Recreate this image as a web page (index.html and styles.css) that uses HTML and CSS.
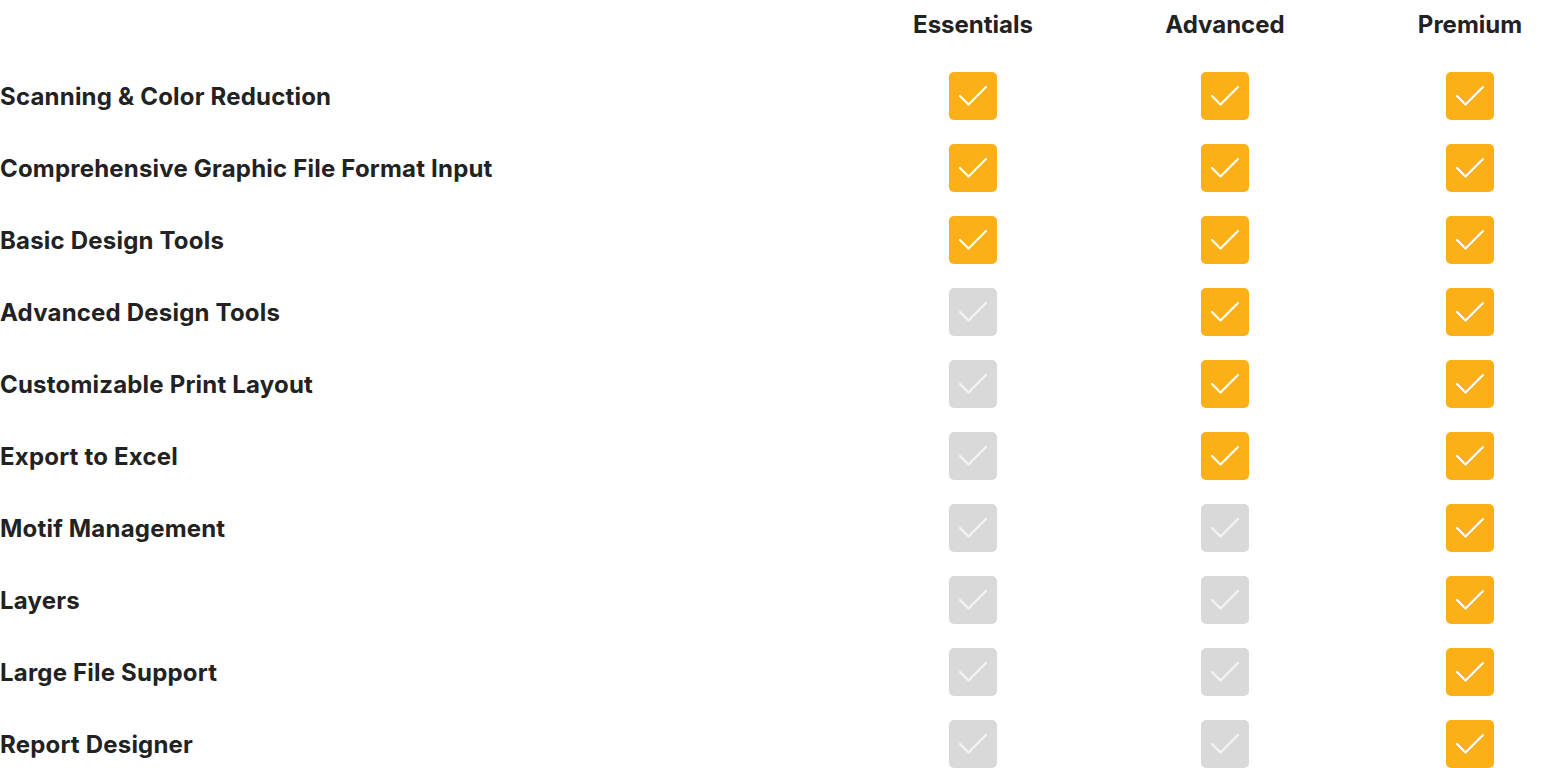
FILE: index.html
```html
<!DOCTYPE html>
<html>
<head>
<meta charset="utf-8">
<link rel="stylesheet" href="styles.css">
</head>
<body>
<div class="compare" id="grid"></div>
<script src="app.js"></script>
</body>
</html>
```

FILE: styles.css
```css
html, body { margin: 0; padding: 0; background: #fff; }
body { font-family: "Inter", "Liberation Sans", sans-serif; color: #222222; }
.compare {
  display: grid;
  grid-template-columns: 1fr 194px 310px 180px;
  grid-auto-rows: 48px;
  row-gap: 24px;
  align-items: center;
}
.head { font-size: 24px; font-weight: 700; text-align: center; letter-spacing: 0; }
.label { font-size: 24px; font-weight: 700; letter-spacing: 0.2px; }
.cell { display: flex; justify-content: center; }
.box {
  width: 48px; height: 48px; border-radius: 5px;
  background: #d9d9d9;
  display: flex; align-items: center; justify-content: center;
}
.box.on { background: #fbb017; }
.box svg { width: 48px; height: 48px; display: block; }
.box polyline { fill: none; stroke: #ffffff; stroke-width: 2.2; stroke-linecap: round; stroke-linejoin: round; }
.box.off polyline { stroke: #f4f4f4; }
```

FILE: app.js
```js
const rows = [
  ["Scanning & Color Reduction", 3],
  ["Comprehensive Graphic File Format Input", 3],
  ["Basic Design Tools", 3],
  ["Advanced Design Tools", 2],
  ["Customizable Print Layout", 2],
  ["Export to Excel", 2],
  ["Motif Management", 1],
  ["Layers", 1],
  ["Large File Support", 1],
  ["Report Designer", 1]
];
const g = document.getElementById('grid');
let html = '<div></div><div class="head">Essentials</div><div class="head">Advanced</div><div class="head">Premium</div>';
const chk = '<svg viewBox="0 0 48 48"><polyline points="11,24 19.5,32.5 37,15"/></svg>';
rows.forEach(([name, n]) => {
  html += '<div class="label">' + name.replace('&', '&amp;') + '</div>';
  for (let i = 0; i < 3; i++) {
    const on = i >= 3 - n;
    html += '<div class="cell"><div class="box ' + (on ? 'on' : 'off') + '">' + chk + '</div></div>';
  }
});
g.innerHTML = html;
```
